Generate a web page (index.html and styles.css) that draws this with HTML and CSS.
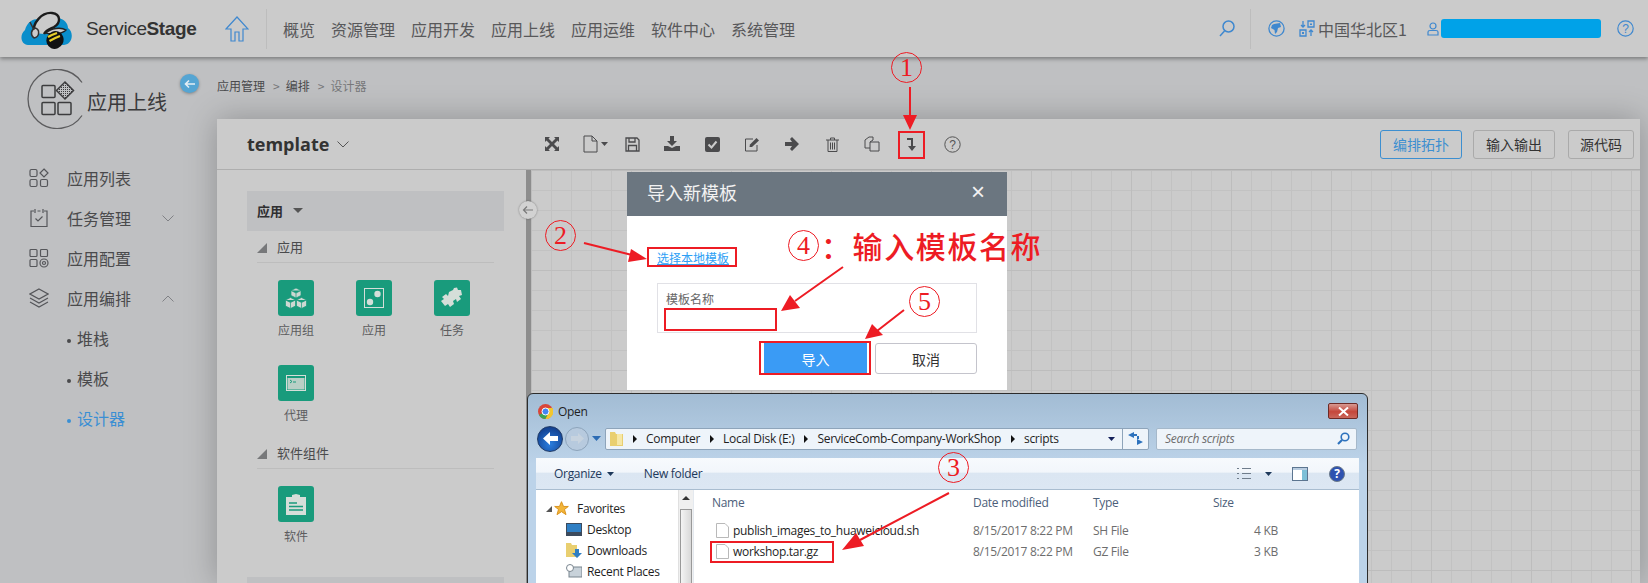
FILE: index.html
```html
<!DOCTYPE html>
<html lang="zh-CN">
<head>
    <meta charset="UTF-8">
    <title>ServiceStage</title>
    <link rel="stylesheet" href="styles.css">
</head>
<body>
<div class="page">
    <header class="topbar">
        <svg class="logo" width="54" height="40" viewBox="0 0 54 40">
            <path d="M8 36C1 36-1 26 5 21 7 13 13 10 18 10 23 3 33 3 38 9 44 10 48 14 48 19 54 23 53 35 44 36Z" fill="#0a8ecb"/>
            <path d="M14 24C12 14 22 3 32 4 41 5 41 14 34 18 30 20 26 21 24 25" fill="#cbcbcb" stroke="#1c1c1c" stroke-width="2.4"/>
            <path d="M10 13L14 21M14 29C10 26 11 21 15 19 20 20 20 28 14 29Z" fill="#cbcbcb" stroke="#333" stroke-width="1.5"/>
            <path d="M26 24C31 19 41 18 46 21 42 25 33 26 26 24Z" fill="#cbcbcb" stroke="#222" stroke-width="1.4"/>
            <ellipse cx="35" cy="31" rx="8.5" ry="9" transform="rotate(25 35 31)" fill="#111"/>
            <path d="M28 28C31 26 34 25 37 24M29.5 32C33 30 37 28 40 27" stroke="#e8cf2a" stroke-width="2.2" fill="none"/>
        </svg>
        <div class="brand">Service<b>Stage</b></div>
        <svg class="home" width="24" height="26" viewBox="0 0 24 26" fill="none" stroke="#3f88cf" stroke-width="1.2">
            <path d="M1 13L12 1 23 13H18V25H14V16H10V25H6V13Z"/>
        </svg>
        <nav class="nav">
            <a>概览</a><a>资源管理</a><a>应用开发</a><a>应用上线</a><a>应用运维</a><a>软件中心</a><a>系统管理</a>
        </nav>
        <div class="top-right">
            <svg width="16" height="17" viewBox="0 0 16 17" fill="none" stroke="#3f88cf" stroke-width="1.5"><circle cx="9.5" cy="6.5" r="5.5"/><path d="M5.5 11L1 16"/></svg>
            <span class="top-sep"></span>
            <svg class="globe" width="17" height="17" viewBox="0 0 17 17"><circle cx="8.5" cy="8.5" r="7.6" fill="none" stroke="#3f88cf" stroke-width="1.3"/><path d="M6 4L12 3 13 7 10 8 9 12 7 14 6.500 10 3 8 4 5Z" fill="#3f88cf"/></svg>
            <svg class="region" width="16" height="17" viewBox="0 0 16 17" fill="none" stroke="#3f88cf" stroke-width="1.3"><path d="M9 1H15V7H9ZM1 10H7V16H1Z"/><path d="M11 3.500H13V5H11ZM3 12H5V14H3Z" fill="#3f88cf" stroke="none"/><path d="M4 1V7M2 5L4 7 6 5M12 16V10M10 12L12 10 14 12"/></svg>
            <span class="region-name">中国华北区1</span>
            <svg class="user" width="12" height="14" viewBox="0 0 12 14" fill="none" stroke="#3f88cf" stroke-width="1.200"><circle cx="6" cy="4" r="3"/><path d="M1 13V10Q1 8.500 3 8.500H9Q11 8.500 11 10V13Z"/></svg>
            <span class="user-bar"></span>
            <svg class="help" width="17" height="17" viewBox="0 0 17 17"><circle cx="8.500" cy="8.500" r="7.700" fill="none" stroke="#3f88cf" stroke-width="1.200"/><text x="8.500" y="13" text-anchor="middle" class="help-mark" fill="#3f88cf">?</text></svg>
        </div>
    </header>

    <div class="main">
        <aside class="sidebar">
            <div class="side-head">
                <svg class="side-ring" width="60" height="60" viewBox="0 0 60 60" fill="none">
                    <defs>
                        <pattern id="dots" width="2" height="2" patternUnits="userSpaceOnUse">
                            <rect width="1" height="1" fill="#3c3c3e"/>
                        </pattern>
                    </defs>
                    <path d="M55 13.500A29.500 29.500 0 1 0 55 46.500" stroke="#5c5c5e" stroke-width="1.300"/>
                    <g stroke="#3c3c3e" stroke-width="1.500">
                        <rect x="15" y="16.500" width="13" height="12" rx="1"/>
                        <rect x="15" y="33.500" width="13" height="12" rx="1"/>
                        <rect x="31" y="33.500" width="13" height="12" rx="1"/>
                        <path d="M38 13L46.500 21.500 38 30 29.500 21.500Z" fill="url(#dots)"/>
                    </g>
                </svg>
                <span class="side-title">应用上线</span>
                <span class="side-toggle">
                    <svg width="12" height="10" viewBox="0 0 12 10" fill="none" stroke="#e4eef5" stroke-width="1.600"><path d="M11 5H2M5 1.500L1.500 5 5 8.500"/></svg>
                </span>
            </div>
            <ul class="side-menu">
                <li class="side-item">
                    <svg width="20" height="20" viewBox="0 0 20 20" fill="none" stroke="#55565a" stroke-width="1.200"><rect x="1" y="1.500" width="7" height="7" rx="1.500"/><rect x="1" y="11.500" width="7" height="7" rx="1.500"/><rect x="11.500" y="11.500" width="7" height="7" rx="1.500"/><path d="M15 1L19 5 15 9 11 5Z"/></svg>
                    <span>应用列表</span>
                </li>
                <li class="side-item">
                    <svg width="20" height="20" viewBox="0 0 20 20" fill="none" stroke="#55565a" stroke-width="1.200"><path d="M5 3H2V18.500H18V3H15M8.500 3H11.500M6 1V5M14 1V5M6.500 10.500L9 13 13.500 8.500"/></svg>
                    <span>任务管理</span>
                    <svg class="chev" width="12" height="7" viewBox="0 0 12 7" fill="none" stroke="#808185" stroke-width="1"><path d="M.5.500L6 6 11.500.500"/></svg>
                </li>
                <li class="side-item">
                    <svg width="20" height="20" viewBox="0 0 20 20" fill="none" stroke="#55565a" stroke-width="1.200"><rect x="1" y="1.500" width="7" height="7" rx="1"/><rect x="1" y="11.500" width="7" height="7" rx="1"/><rect x="11.500" y="1.500" width="7" height="7" rx="1"/><circle cx="15" cy="15" r="4"/><circle cx="15" cy="15" r="1.500"/></svg>
                    <span>应用配置</span>
                </li>
                <li class="side-item">
                    <svg width="20" height="20" viewBox="0 0 20 20" fill="none" stroke="#55565a" stroke-width="1.200"><path d="M10 1L19 6 10 11 1 6ZM1 10L10 15 19 10M1 14L10 19 19 14"/></svg>
                    <span>应用编排</span>
                    <svg class="chev" width="12" height="7" viewBox="0 0 12 7" fill="none" stroke="#808185" stroke-width="1"><path d="M.5 6.500L6 1 11.500 6.500"/></svg>
                </li>
                <li class="side-sub">堆栈</li>
                <li class="side-sub">模板</li>
                <li class="side-sub is-active">设计器</li>
            </ul>
        </aside>

        <section class="content">
            <div class="crumbs">
                <span>应用管理</span><i>&gt;</i><span>编排</span><i>&gt;</i><em>设计器</em>
            </div>
            <div class="panel">
                <div class="panel-bar">
                    <div class="tpl-name">template
                        <svg width="12" height="7" viewBox="0 0 12 7" fill="none" stroke="#555" stroke-width="1"><path d="M.5.500L6 6 11.500.500"/></svg>
                    </div>
                    <div class="tools">
                        <svg width="16" height="16" viewBox="0 0 16 16" fill="#4b4b4d"><path d="M1 1H6L4.500 2.500 8 6 11.500 2.500 10 1H15V6L13.500 4.500 10 8 13.500 11.500 15 10V15H10L11.500 13.500 8 10 4.500 13.500 6 15H1V10L2.500 11.500 6 8 2.500 4.500 1 6Z"/></svg>
                        <span class="tool-doc">
                            <svg width="15" height="18" viewBox="0 0 15 18" fill="none" stroke="#4b4b4d" stroke-width="1"><path d="M1 1H9L14 6V17H1ZM9 1V6H14"/></svg>
                            <svg width="7" height="4" viewBox="0 0 7 4" fill="#4b4b4d"><path d="M0 0H7L3.500 4Z"/></svg>
                        </span>
                        <svg width="15" height="15" viewBox="0 0 15 15" fill="none" stroke="#4b4b4d" stroke-width="1.300"><path d="M1 1H12L14 3V14H1ZM4 1V5H10V1M3.500 14V8.500H11.500V14"/></svg>
                        <svg width="16" height="16" viewBox="0 0 16 16" fill="#4b4b4d"><path d="M6 0H10V5H13L8 10 3 5H6ZM0 10H4L8 12 12 10H16V15H0Z"/></svg>
                        <svg width="15" height="15" viewBox="0 0 15 15"><rect width="15" height="15" rx="2" fill="#4b4b4d"/><path d="M3.500 7.500L6.500 10.500 11.500 4.500" fill="none" stroke="#cbcbcb" stroke-width="2"/></svg>
                        <svg width="16" height="15" viewBox="0 0 16 15" fill="none" stroke="#4b4b4d" stroke-width="1"><path d="M9 2H1.500V14H13V8"/><path d="M5.500 10L6 7.500 12.500 1 15 3.500 8 10Z" fill="#4b4b4d" stroke="none"/></svg>
                        <svg width="15" height="14" viewBox="0 0 15 14" fill="#4b4b4d"><path d="M0 5H7L5 2 7 0 14 7 7 14 5 12 7 9H0Z"/></svg>
                        <svg width="13" height="15" viewBox="0 0 13 15" fill="none" stroke="#4b4b4d" stroke-width="1"><path d="M0 3H13M4.500 3V1H8.500V3M2 3V14.500H11V3M4.500 5.500V12.500M6.500 5.500V12.500M8.500 5.500V12.500"/></svg>
                        <svg width="16" height="16" viewBox="0 0 16 16" fill="none" stroke="#4b4b4d" stroke-width="1"><path d="M6 12H1V4L5 1H9V4M6 6H15V15H6ZM6 6L9 4"/></svg>
                        <svg width="10" height="14" viewBox="0 0 10 14" fill="#4b4b4d"><path d="M0 1H6V9H9L5 14 1 9H4V3H0Z"/></svg>
                        <svg width="17" height="17" viewBox="0 0 17 17"><circle cx="8.500" cy="8.500" r="7.700" fill="none" stroke="#555" stroke-width="1"/><text x="8.500" y="13" text-anchor="middle" class="help-mark" fill="#555">?</text></svg>
                    </div>
                    <div class="view-tabs">
                        <button class="tab is-active">编排拓扑</button>
                        <button class="tab">输入输出</button>
                        <button class="tab tab-short">源代码</button>
                    </div>
                </div>
                <div class="panel-body">
                    <div class="palette">
                        <div class="pal-head">应用<span class="caret"></span></div>
                        <div class="pal-section">应用</div>
                        <div class="pal-grid">
                            <div class="pal-item">
                                <span class="pal-icon"><svg width="22" height="22" viewBox="0 0 22 22" fill="#cdd8d2" stroke="#199b7c" stroke-width=".7"><path d="M11 1L16 3.500V8.500L11 11 6 8.500V3.500ZM6 3.500L11 6 16 3.500M11 6V11"/><path d="M5.500 10.500L10.500 13V19L5.500 21.500 .5 19V13ZM.5 13L5.500 15.500 10.500 13M5.500 15.500V21.500"/><path d="M16.500 10.500L21.500 13V19L16.500 21.500 11.500 19V13ZM11.500 13L16.500 15.500 21.500 13M16.500 15.500V21.500"/></svg></span>
                                <span>应用组</span>
                            </div>
                            <div class="pal-item">
                                <span class="pal-icon"><svg width="20" height="20" viewBox="0 0 20 20"><rect x=".5" y=".5" width="19" height="19" fill="none" stroke="#d5ded9"/><circle cx="13.500" cy="6" r="3.200" fill="#d5ded9"/><circle cx="6" cy="14" r="3.200" fill="#d5ded9"/></svg></span>
                                <span>应用</span>
                            </div>
                            <div class="pal-item">
                                <span class="pal-icon"><svg width="24" height="22" viewBox="0 0 24 22" fill="#d5ded9"><path d="M9 5L13 3 14 1 17 .5 18 3 21 3 22 8 19 9 21 12 17 15 16 12 13 14 14 17 10 20 8 17 5 19 1 14 4 12 2 10 6 7 8 9Z"/></svg></span>
                                <span>任务</span>
                            </div>
                            <div class="pal-item">
                                <span class="pal-icon"><svg width="20" height="16" viewBox="0 0 20 16" fill="none" stroke="#d5ded9"><rect x=".5" y=".5" width="19" height="15"/><rect x="1.500" y="3" width="17" height="11.500" fill="#b9cfc6" stroke="none"/><path d="M4 5L6 6.500 4 8M7 7H10" stroke="#199b7c"/></svg></span>
                                <span>代理</span>
                            </div>
                        </div>
                        <div class="pal-section">软件组件</div>
                        <div class="pal-grid">
                            <div class="pal-item">
                                <span class="pal-icon"><svg width="20" height="21" viewBox="0 0 20 21"><path d="M0 3H6V1L10 0 14 1V3H20V21H0Z" fill="#d5ded9"/><path d="M3 9H11M3 12.500H17M3 16H17" stroke="#199b7c" stroke-width="1.300"/></svg></span>
                                <span>软件</span>
                            </div>
                        </div>
                        <div class="pal-head pal-foot"></div>
                    </div>
                    <div class="splitter">
                        <span class="split-btn">
                            <svg width="12" height="10" viewBox="0 0 12 10" fill="none" stroke="#7a7a7a" stroke-width="1.200"><path d="M11 5H2M5 1.500L1.500 5 5 8.500"/></svg>
                        </span>
                    </div>
                    <div class="canvas"></div>
                </div>
            </div>
        </section>
    </div>

    <div class="modal">
        <div class="modal-head">导入新模板<span class="modal-x">×</span></div>
        <div class="modal-body">
            <a class="file-link">选择本地模板</a>
            <div class="name-box">
                <label>模板名称</label>
                <span class="name-input"></span>
            </div>
            <div class="modal-btns">
                <button class="btn-ok">导入</button>
                <button class="btn-cancel">取消</button>
            </div>
        </div>
    </div>

    <div class="win">
        <div class="win-title">
            <svg width="15" height="15" viewBox="0 0 15 15"><circle cx="7.500" cy="7.500" r="7.500" fill="#d9463a"/><path d="M7.500 7.500L1 11A7.500 7.500 0 0 0 7.500 15L11 8.500Z" fill="#3ba456"/><path d="M7.500 4H14.500A7.500 7.500 0 0 1 7.500 15L10.500 9Z" fill="#f2c62e"/><circle cx="7.500" cy="7.500" r="3.500" fill="#4285f4" stroke="#fff"/></svg>
            <span>Open</span>
            <span class="win-close"><svg width="11" height="9" viewBox="0 0 11 9" fill="none" stroke="#fff" stroke-width="2"><path d="M1 .5L10 8.500M10 .5L1 8.500"/></svg></span>
        </div>
        <div class="win-addr">
            <span class="nav-back"><svg width="15" height="13" viewBox="0 0 15 13" fill="#fff"><path d="M7 0V4H15V9H7V13L0 6.500Z"/></svg></span>
            <span class="nav-fwd"><svg width="13" height="11" viewBox="0 0 13 11" fill="#c7d3df"><path d="M7 0V3H0V8H7V11L13 5.500Z"/></svg></span>
            <svg class="nav-drop" width="9" height="5" viewBox="0 0 9 5" fill="#2d6cb4"><path d="M0 0H9L4.500 5Z"/></svg>
            <div class="addr-box">
                <svg width="13" height="16" viewBox="0 0 13 16"><path d="M0 1H5L6 3H13V15H0Z" fill="#e9cf70"/><rect x="7" y="3" width="5" height="11" fill="#f6e7a6"/></svg>
                <span class="addr-sep"></span><span>Computer</span>
                <span class="addr-sep"></span><span>Local Disk (E:)</span>
                <span class="addr-sep"></span><span>ServiceComb-Company-WorkShop</span>
                <span class="addr-sep"></span><span>scripts</span>
                <svg class="addr-drop" width="7" height="4" viewBox="0 0 7 4" fill="#14205a"><path d="M0 0H7L3.500 4Z"/></svg>
                <span class="addr-go"><svg width="15" height="13" viewBox="0 0 15 13" fill="#2d72bd"><path d="M6 0V6L0 3ZM9 13V7L15 10ZM6 2H9V4H6ZM9 7V4H11V7Z"/></svg></span>
            </div>
            <div class="search-box">
                <span>Search scripts</span>
                <svg width="13" height="13" viewBox="0 0 13 13" fill="none" stroke="#2d72bd" stroke-width="1.600"><circle cx="8" cy="5" r="3.800"/><path d="M5 8L1 12" stroke-width="2.200"/></svg>
            </div>
        </div>
        <div class="win-tools">
            <span>Organize</span><svg width="7" height="4" viewBox="0 0 7 4" fill="#1e395b"><path d="M0 0H7L3.500 4Z"/></svg>
            <span class="new-folder">New folder</span>
            <span class="win-tools-right">
                <svg width="15" height="13" viewBox="0 0 15 13" fill="none" stroke="#6f7d8c"><path d="M1 1.500H3M1 6.500H3M1 11.500H3M6 1.500H15M6 6.500H15M6 11.500H15"/></svg>
                <svg width="7" height="4" viewBox="0 0 7 4" fill="#1e395b"><path d="M0 0H7L3.500 4Z"/></svg>
                <svg class="pane-ico" width="16" height="14" viewBox="0 0 16 14"><rect x=".5" y=".5" width="15" height="13" fill="#fff" stroke="#5c7590"/><rect x="10" y="1" width="5" height="12" fill="#7cc0d8"/><rect x="1" y="1" width="14" height="2" fill="#b8cce0"/></svg>
                <span class="help-ball">?</span>
            </span>
        </div>
        <div class="win-body">
            <div class="tree">
                <div class="tree-list">
                    <div class="tree-row tree-top">
                        <svg width="15" height="15" viewBox="0 0 11 11" fill="#f2b53a" stroke="#d9911a" stroke-width=".7"><path d="M5.500 .5L7 4H10.500L7.700 6.200 8.800 10 5.500 7.800 2.200 10 3.300 6.200 .5 4H4Z"/></svg>
                        <span>Favorites</span>
                    </div>
                    <div class="tree-row">
                        <svg width="16" height="13" viewBox="0 0 16 13"><rect width="16" height="13" fill="#3c4a5c"/><rect x="1" y="1" width="14" height="8" fill="#2f7fc4"/></svg>
                        <span>Desktop</span>
                    </div>
                    <div class="tree-row">
                        <svg width="16" height="15" viewBox="0 0 16 15"><path d="M0 0H5L6 2H11V14H0Z" fill="#e9cf70"/><path d="M9 6H13V10H16L11 15 6 10H9Z" fill="#2f7fc4"/></svg>
                        <span>Downloads</span>
                    </div>
                    <div class="tree-row">
                        <svg width="16" height="15" viewBox="0 0 16 15"><rect x="3" y="3" width="13" height="10" fill="#c8d2da" stroke="#79858f"/><circle cx="4" cy="4" r="3.500" fill="#fff" stroke="#79858f"/></svg>
                        <span>Recent Places</span>
                    </div>
                </div>
                <div class="tree-scroll"><i></i><b></b></div>
            </div>
            <div class="files">
                <div class="file-head">
                    <span class="col-name">Name</span>
                    <span class="col-date">Date modified</span>
                    <span class="col-type">Type</span>
                    <span class="col-size">Size</span>
                </div>
                <div class="file-row">
                    <span class="col-name"><svg width="13" height="15" viewBox="0 0 13 15" fill="#fff" stroke="#b9b9b9"><path d="M.5.500H9L12.500 4V14.500H.5Z"/></svg>publish_images_to_huaweicloud.sh</span>
                    <span class="col-date">8/15/2017 8:22 PM</span>
                    <span class="col-type">SH File</span>
                    <span class="col-size">4 KB</span>
                </div>
                <div class="file-row">
                    <span class="col-name"><svg width="13" height="15" viewBox="0 0 13 15" fill="#fff" stroke="#b9b9b9"><path d="M.5.500H9L12.500 4V14.500H.5Z"/></svg>workshop.tar.gz</span>
                    <span class="col-date">8/15/2017 8:22 PM</span>
                    <span class="col-type">GZ File</span>
                    <span class="col-size">3 KB</span>
                </div>
            </div>
        </div>
    </div>

    <!-- annotations drawn on top of the screenshot -->
    <svg class="marks" width="1648" height="583" viewBox="0 0 1648 583" fill="none">
        <g stroke="#ed1c24" stroke-width="2">
            <rect x="899" y="132" width="25" height="26"/>
            <rect x="648" y="248" width="88" height="18"/>
            <rect x="665" y="309" width="111" height="21"/>
            <rect x="760" y="342" width="110" height="32"/>
            <rect x="711" y="542" width="122" height="20"/>
            <path d="M910 87V116M584 243L632 255M843 267L795 301M904 310L877 331M949 493L860 540"/>
        </g>
        <g fill="#ed1c24">
            <path d="M903 115H917L910 130Z"/>
            <path d="M647 259L631 249 628 262Z"/>
            <path d="M781 311L790 295 800 308Z"/>
            <path d="M865 339L872 324 883 335Z"/>
            <path d="M842 550L856 533 864 546Z"/>
        </g>
    </svg>
    <span class="num num-1">1</span>
    <span class="num num-2">2</span>
    <span class="num num-3">3</span>
    <span class="num num-4">4</span>
    <span class="num num-5">5</span>
    <span class="note">：输入模板名称</span>
</div>
</body>
</html>
```

FILE: styles.css
```css
* {
    box-sizing: border-box;
}
html, body {
    margin: 0;
    height: 583px;
    overflow: hidden;
}
body {
    font-family: "Noto Sans CJK SC", "Noto Sans", sans-serif;
    color: #3c3c3e;
    background-color: #bfc0c2;
}
svg {
    display: block;
    flex: none;
}
.page {
    position: relative;
    width: 1648px;
    height: 583px;
    overflow: hidden;
    display: flex;
    flex-direction: column;
}

/* top bar */
.topbar {
    position: relative;
    z-index: 2;
    height: 57px;
    flex: none;
    display: flex;
    align-items: center;
    padding-left: 20px;
    background-color: #cbcbcb;
    box-shadow: 0 2px 4px rgba(0, 0, 0, 0.35);
}
.brand {
    margin-left: 12px;
    width: 139px;
    font-family: "Liberation Sans", sans-serif;
    font-size: 19px;
    letter-spacing: -0.4px;
    color: #333;
}
.home {
    margin-right: 17px;
}
.nav {
    display: flex;
    gap: 16px;
    height: 40px;
    align-items: center;
    padding-left: 16px;
    border-left: 1px solid #bdbdbd;
    font-size: 16px;
    line-height: 20px;
    color: #58585a;
}
.top-right {
    margin-left: auto;
    display: flex;
    align-items: center;
    font-size: 16px;
    color: #58585a;
}
.top-sep {
    width: 1px;
    height: 40px;
    margin: 0 17px 0 15px;
    background-color: #bdbdbd;
}
.region {
    margin-left: 14px;
}
.region-name {
    margin-left: 3px;
    width: 89px;
    font-size: 16px;
}
.user {
    margin-left: 20px;
}
.user-bar {
    width: 160px;
    height: 19px;
    margin-left: 2px;
    border-radius: 3px;
    background-color: #00a2e8;
}
.help {
    margin: 0 14px 0 16px;
}
.help-mark {
    font-family: "Liberation Sans", sans-serif;
    font-size: 12px;
}

/* left menu */
.main {
    flex: 1;
    display: flex;
    min-height: 0;
}
.sidebar {
    width: 217px;
    flex: none;
}
.side-head {
    position: relative;
    height: 87px;
    display: flex;
    align-items: flex-start;
    padding: 11.500px 0 0 27px;
}
.side-title {
    margin-top: 19px;
    font-size: 20px;
    line-height: 28px;
    color: #3a3a3c;
}
.side-toggle {
    position: absolute;
    left: 180px;
    top: 17px;
    width: 19px;
    height: 19px;
    display: flex;
    align-items: center;
    justify-content: center;
    border-radius: 50%;
    background-color: #55a5d3;
    box-shadow: 0 1px 3px rgba(0, 0, 0, 0.3);
}
.side-menu {
    list-style: none;
    margin: 14px 0 0;
    padding: 0;
    font-size: 16px;
}
.side-item {
    height: 40px;
    display: flex;
    align-items: center;
    padding-left: 29px;
    color: #4a4a4c;
}
.side-item span {
    margin-left: 18px;
}
.chev {
    margin-left: 31px;
}
.side-sub {
    height: 40px;
    line-height: 40px;
    padding-left: 67px;
    color: #4a4a4c;
}
.side-sub::before {
    content: "";
    display: inline-block;
    width: 4px;
    height: 4px;
    margin-right: 6px;
    vertical-align: middle;
    border-radius: 50%;
    background-color: currentColor;
}
.side-sub.is-active {
    color: #3a8fd4;
}

/* main panel */
.content {
    flex: 1;
    min-width: 0;
    display: flex;
    flex-direction: column;
    padding-right: 8px;
}
.crumbs {
    height: 62px;
    flex: none;
    padding-top: 19px;
    display: flex;
    font-size: 12px;
    line-height: 20px;
    color: #4a4a4c;
}
.crumbs i {
    font-style: normal;
    margin: 0 6px 0 8px;
    color: #77787a;
}
.crumbs em {
    font-style: normal;
    color: #77787a;
}
.panel {
    flex: 1;
    min-height: 0;
    display: flex;
    flex-direction: column;
    background-color: #cbcbcb;
    box-shadow: 0 0 30px rgba(0, 0, 0, 0.25);
}
.panel-bar {
    height: 51px;
    flex: none;
    display: flex;
    align-items: center;
    border-bottom: 1px solid #aeaeae;
    position: relative;
}
.tpl-name {
    width: 315px;
    padding-left: 30px;
    display: flex;
    align-items: center;
    gap: 8px;
    font-family: "Open Sans", sans-serif;
    font-size: 18px;
    font-weight: 700;
    color: #333;
}
.tools {
    display: grid;
    grid-template-columns: repeat(11, 40px);
    justify-items: center;
    align-items: center;
}
.tool-doc {
    display: flex;
    align-items: center;
    gap: 3px;
    margin-left: 7px;
}
.view-tabs {
    margin-left: auto;
    display: flex;
    gap: 11px;
    padding-right: 6px;
}
.tab {
    width: 82px;
    height: 29px;
    padding: 0;
    border: 1px solid #aaa;
    border-radius: 3px;
    background: transparent;
    font: 14px "Noto Sans CJK SC", sans-serif;
    color: #333;
}
.tab-short {
    width: 66px;
    margin-left: 2px;
}
.tab.is-active {
    border-color: #3d8fd0;
    color: #3d8fd0;
}
.panel-body {
    flex: 1;
    min-height: 0;
    display: flex;
}
.palette {
    width: 309px;
    flex: none;
    padding: 21px 22px 0 30px;
    overflow: hidden;
}
.pal-head {
    height: 40px;
    display: flex;
    align-items: center;
    padding: 0 0 2px 10px;
    background-color: #bfc0c2;
    font-size: 13px;
    font-weight: 700;
    color: #2f2f31;
}
.pal-foot {
    margin-top: 19px;
}
.caret {
    margin-left: 10px;
    border-top: 5px solid #555;
    border-left: 5px solid transparent;
    border-right: 5px solid transparent;
}
.pal-section {
    position: relative;
    height: 32px;
    margin: 0 10px;
    padding-left: 20px;
    line-height: 32px;
    border-bottom: 1px solid #bdbdbd;
    font-size: 13px;
    color: #4a4a4c;
}
.pal-section::before {
    content: "";
    position: absolute;
    left: 0;
    top: 12px;
    border-bottom: 10px solid #77787a;
    border-left: 10px solid transparent;
}
.pal-grid {
    display: grid;
    grid-template-columns: repeat(3, 78px);
    row-gap: 27px;
    padding: 17px 0 14px 10px;
}
.pal-item {
    display: flex;
    flex-direction: column;
    align-items: center;
    gap: 5px;
    font-size: 12px;
    line-height: 17px;
    color: #5c5c5e;
}
.pal-icon {
    width: 36px;
    height: 36px;
    display: flex;
    align-items: center;
    justify-content: center;
    border-radius: 3px;
    background-color: #199b7c;
}
.splitter {
    position: relative;
    width: 5px;
    flex: none;
    background-color: #8d8d8d;
}
.split-btn {
    position: absolute;
    left: -7px;
    top: 31px;
    width: 18px;
    height: 18px;
    display: flex;
    align-items: center;
    justify-content: center;
    border-radius: 50%;
    background-color: #d2d2d2;
    box-shadow: 0 0 2px rgba(0, 0, 0, 0.4);
}
.canvas {
    flex: 1;
    background-color: #cbcbcb;
    background-image:
        linear-gradient(#bdbdbd 1px, transparent 1px),
        linear-gradient(90deg, #bdbdbd 1px, transparent 1px),
        linear-gradient(#c2c2c2 1px, transparent 1px),
        linear-gradient(90deg, #c2c2c2 1px, transparent 1px);
    background-size: 100px 100px, 100px 100px, 20px 20px, 20px 20px;
}

/* import dialog */
.modal {
    position: absolute;
    z-index: 3;
    left: 627px;
    top: 172px;
    width: 380px;
    height: 218px;
    background-color: #fff;
}
.modal-head {
    height: 44px;
    display: flex;
    align-items: center;
    justify-content: space-between;
    padding: 0 22px 4px 20px;
    background-color: #6b7680;
    font-size: 18px;
    color: #f2f2f2;
}
.modal-x {
    font-size: 24px;
    line-height: 24px;
    font-family: "Liberation Sans", sans-serif;
}
.modal-body {
    padding: 33px 30px 0;
}
.file-link {
    display: block;
    height: 34px;
    font-size: 12px;
    line-height: 18px;
    color: #2ea0f5;
    text-decoration: underline;
}
.name-box {
    height: 50px;
    padding: 4px 8px;
    border: 1px solid #e1e1e6;
    font-size: 12px;
    line-height: 22px;
    color: #666;
}
.name-box label {
    display: block;
}
.modal-btns {
    display: flex;
    justify-content: flex-end;
    gap: 8px;
    margin-top: 10px;
}
.btn-ok, .btn-cancel {
    height: 31px;
    padding: 0;
    border-radius: 3px;
    font: 14px "Noto Sans CJK SC", sans-serif;
}
.btn-ok {
    width: 103px;
    border: none;
    border-radius: 0;
    background-color: #3a9bf5;
    color: #fff;
}
.btn-cancel {
    width: 102px;
    border: 1px solid #c4c4cc;
    background-color: #fff;
    color: #333;
}

/* windows 7 open dialog */
.win {
    position: absolute;
    z-index: 4;
    left: 527px;
    top: 393px;
    width: 841px;
    height: 230px;
    padding: 0 8px;
    border: 1px solid #2c2c2c;
    border-radius: 6px 6px 0 0;
    background: linear-gradient(#a2bcd4, #bcd3e9 70px);
    font-family: "Open Sans", sans-serif;
    font-size: 12px;
    letter-spacing: -0.300px;
    color: #1e1e1e;
}
.win-title {
    position: relative;
    height: 33px;
    display: flex;
    align-items: center;
    gap: 5px;
    padding: 2px 0 0 2px;
}
.win-close {
    position: absolute;
    right: 1px;
    top: 9px;
    width: 30px;
    height: 16px;
    display: flex;
    align-items: center;
    justify-content: center;
    border: 1px solid #6d2a25;
    border-radius: 2px;
    background: linear-gradient(#d79a92, #c5473b 55%, #c9675b);
}
.win-addr {
    height: 23px;
    display: flex;
    align-items: center;
}
.nav-back, .nav-fwd {
    display: flex;
    align-items: center;
    justify-content: center;
    border-radius: 50%;
}
.nav-back {
    width: 26px;
    height: 26px;
    margin-left: 1px;
    border: 1px solid #1f3a66;
    background: radial-gradient(circle at 50% 70%, #2b7fe0, #0b2f7a);
}
.nav-fwd {
    width: 24px;
    height: 24px;
    margin-left: 2px;
    border: 1px solid #8da4bb;
    background: #b7cade;
}
.nav-drop {
    margin: 0 4px 0 3px;
}
.addr-box {
    width: 544px;
    height: 22px;
    display: flex;
    align-items: center;
    padding-left: 4px;
    border: 1px solid #8ea4ba;
    border-radius: 2px;
    background: #eef4fa;
    overflow: hidden;
}
.addr-sep {
    width: 0;
    height: 0;
    margin: 0 9px 0 10px;
    border-left: 4px solid #111;
    border-top: 4px solid transparent;
    border-bottom: 4px solid transparent;
}
.addr-drop {
    margin-left: auto;
    margin-right: 7px;
}
.addr-go {
    width: 26px;
    height: 22px;
    display: flex;
    align-items: center;
    justify-content: center;
    border-left: 1px solid #8ea4ba;
}
.search-box {
    width: 201px;
    height: 22px;
    margin-left: 7px;
    display: flex;
    align-items: center;
    justify-content: space-between;
    padding: 0 6px 0 8px;
    border: 1px solid #a5b8ca;
    border-radius: 2px;
    background: #eef4fa;
    font-style: italic;
    color: #6d6d6d;
}
.win-tools {
    height: 32px;
    margin-top: 8px;
    display: flex;
    align-items: center;
    gap: 5px;
    padding: 0 14px 0 18px;
    border-bottom: 1px solid #a9bdd0;
    background: linear-gradient(#f7fafd, #f2f6fb 45%, #dbe6f2 50%, #dce7f3);
    color: #1e395b;
}
.new-folder {
    margin-left: 25px;
}
.win-tools-right {
    margin-left: auto;
    display: flex;
    align-items: center;
    gap: 14px;
}
.pane-ico {
    margin-left: 6px;
}
.help-ball {
    width: 16px;
    height: 16px;
    margin-left: 7px;
    text-align: center;
    line-height: 14px;
    font-weight: 700;
    border: 1px solid #6b7a8a;
    border-radius: 50%;
    background: #2e52b0;
    color: #fff;
}
.win-body {
    height: 120px;
    display: flex;
    background-color: #fff;
}
.tree {
    width: 158px;
    flex: none;
    display: flex;
    border-right: 1px solid #e4e9ef;
}
.tree-list {
    flex: 1;
    padding: 8px 0 0 10px;
}
.tree-row {
    height: 21px;
    display: flex;
    align-items: center;
    gap: 5px;
    padding-left: 20px;
}
.tree-top {
    padding-left: 0;
    gap: 8px;
}
.tree-top::before {
    content: "";
    margin-right: -6px;
    border-bottom: 6px solid #555;
    border-left: 6px solid transparent;
}
.tree-scroll {
    width: 15px;
    flex: none;
    position: relative;
    background: #f0f0f0;
    border-left: 1px solid #e0e0e0;
}
.tree-scroll i {
    position: absolute;
    left: 3px;
    top: 6px;
    border-bottom: 4px solid #333;
    border-left: 4px solid transparent;
    border-right: 4px solid transparent;
}
.tree-scroll b {
    position: absolute;
    left: 1px;
    right: 1px;
    top: 19px;
    bottom: 0;
    background: linear-gradient(90deg, #f4f4f4, #d8d8d8);
    border: 1px solid #999;
}
.files {
    flex: 1;
    min-width: 0;
    padding-left: 18px;
    color: #1e1e1e;
}
.file-head, .file-row {
    display: grid;
    grid-template-columns: 261px 120px 120px 65px;
}
.file-head {
    height: 30px;
    padding-top: 2px;
    align-items: flex-start;
    color: #4c607a;
}
.file-head span {
    line-height: 20px;
    padding-top: 1px;
}
.file-row {
    height: 21px;
    align-items: center;
    color: #6d6d6d;
}
.file-row .col-name {
    display: flex;
    align-items: center;
    gap: 4px;
    color: #1e1e1e;
    margin-left: 4px;
}
.file-row .col-size {
    text-align: right;
}

/* red annotations */
.marks {
    position: absolute;
    z-index: 5;
    left: 0;
    top: 0;
    pointer-events: none;
}
.num {
    position: absolute;
    z-index: 6;
    width: 31px;
    height: 31px;
    border: 1px solid #ed1c24;
    border-radius: 50%;
    text-align: center;
    font-family: "Liberation Serif", serif;
    font-size: 26px;
    line-height: 29px;
    color: #ed1c24;
}
.num-1 { left: 891px; top: 52px; }
.num-2 { left: 545px; top: 220px; }
.num-3 { left: 938px; top: 452px; }
.num-4 { left: 788px; top: 230px; }
.num-5 { left: 909px; top: 286px; }
.note {
    position: absolute;
    z-index: 6;
    left: 821px;
    top: 226px;
    font-size: 30px;
    line-height: 38px;
    font-weight: 500;
    letter-spacing: 1.600px;
    white-space: nowrap;
    color: #ed1c24;
}
```
